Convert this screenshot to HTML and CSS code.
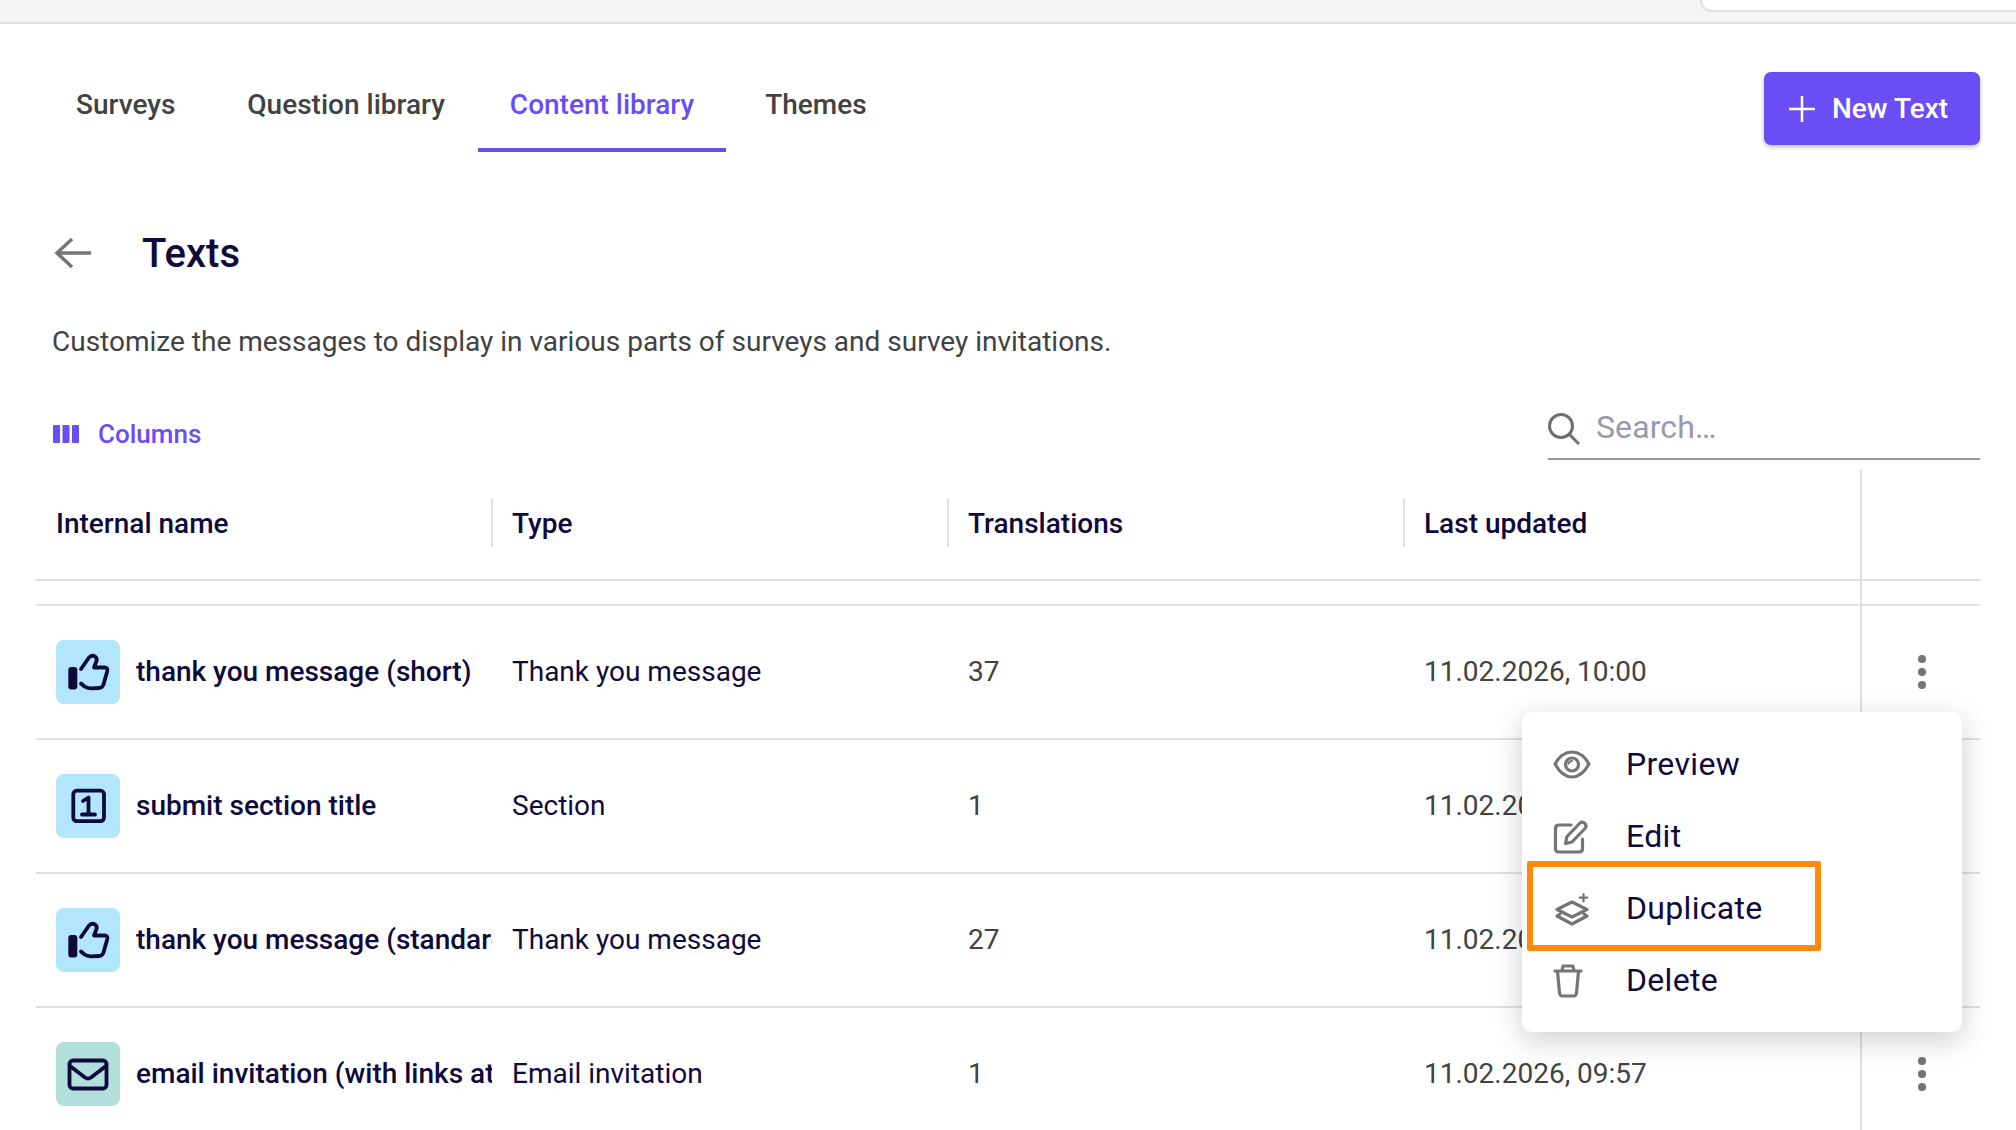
FILE: index.html
```html
<!DOCTYPE html>
<html lang="en">
<head>
    <meta charset="UTF-8">
    <title>Texts</title>
    <link rel="stylesheet" href="styles.css">
</head>
<body>
    <div class="topbar"><div class="topbar-tab"></div></div>

    <div class="nav">
        <div class="tabs">
            <a class="tab">Surveys</a>
            <a class="tab">Question library</a>
            <a class="tab tab-active">Content library</a>
            <a class="tab">Themes</a>
        </div>
        <button class="btn-new">
            <svg class="btn-plus" viewBox="0 0 26 26"><path d="M13 0V26M0 13H26"/></svg>
            New Text
        </button>
    </div>

    <div class="page-head">
        <svg class="back" viewBox="0 0 38 32"><path d="M37 16H3M18 2L3 16L18 30"/></svg>
        <h1>Texts</h1>
    </div>
    <p class="desc">Customize the messages to display in various parts of surveys and survey invitations.</p>

    <div class="toolbar">
        <a class="columns">
            <svg class="columns-icon" viewBox="0 0 26 18"><rect width="7" height="18" rx="1"/><rect x="9.500" width="7" height="18" rx="1"/><rect x="19" width="7" height="18" rx="1"/></svg>
            Columns
        </a>
        <div class="search">
            <svg class="search-icon" viewBox="0 0 32 32"><circle cx="13" cy="13" r="11.5"/><path d="M21.5 21.5L31 31"/></svg>
            <span>Search…</span>
        </div>
    </div>

    <div class="table">
        <div class="row head">
            <div class="cell"><span>Internal name</span></div>
            <div class="cell"><span>Type</span></div>
            <div class="cell"><span>Translations</span></div>
            <div class="cell"><span>Last updated</span></div>
            <div class="cell-action"></div>
        </div>
        <div class="row filter">
            <div class="cell"></div><div class="cell"></div><div class="cell"></div><div class="cell"></div>
            <div class="cell-action"></div>
        </div>

        <div class="row">
            <div class="cell name">
                <div class="type-icon blue">
                    <svg viewBox="0 0 64 64"><use href="#thumb"/></svg>
                </div>
                <span>thank you message (short)</span>
            </div>
            <div class="cell navy">Thank you message</div>
            <div class="cell gray">37</div>
            <div class="cell gray">11.02.2026, 10:00</div>
            <div class="cell-action"><i class="dots"></i></div>
        </div>
        <div class="row">
            <div class="cell name">
                <div class="type-icon blue">
                    <svg viewBox="0 0 64 64">
                        <rect x="17.300" y="16.700" width="30.700" height="30.400" rx="3.500" class="line"/>
                        <path d="M27 27L32.500 23.500V40M26 40.500H39" class="line"/>
                    </svg>
                </div>
                <span>submit section title</span>
            </div>
            <div class="cell navy">Section</div>
            <div class="cell gray">1</div>
            <div class="cell gray">11.02.2026, 09:58</div>
            <div class="cell-action"></div>
        </div>
        <div class="row">
            <div class="cell name">
                <div class="type-icon blue">
                    <svg viewBox="0 0 64 64"><use href="#thumb"/></svg>
                </div>
                <span>thank you message (standard)</span>
            </div>
            <div class="cell navy">Thank you message</div>
            <div class="cell gray">27</div>
            <div class="cell gray">11.02.2026, 09:58</div>
            <div class="cell-action"></div>
        </div>
        <div class="row">
            <div class="cell name">
                <div class="type-icon teal">
                    <svg viewBox="0 0 64 64">
                        <rect x="13.500" y="18.500" width="37" height="28" rx="3.500" class="line"/>
                        <path d="M14 24L29 35.500Q32 37.500 35 35.500L50 24" class="line"/>
                    </svg>
                </div>
                <span>email invitation (with links at the bottom)</span>
            </div>
            <div class="cell navy">Email invitation</div>
            <div class="cell gray">1</div>
            <div class="cell gray">11.02.2026, 09:57</div>
            <div class="cell-action"><i class="dots"></i></div>
        </div>
    </div>

    <!-- row action menu, open on the first row -->
    <div class="menu">
        <div class="menu-item">
            <svg viewBox="0 0 40 40"><path d="M3 20C8 11 14 8 20 8C26 8 32 11 37 20C32 29 26 33 20 33C14 33 8 29 3 20Z"/><circle cx="20" cy="20.5" r="6.5"/><path d="M16.5 19.5Q17.5 17 20 17" class="thin"/></svg>
            Preview
        </div>
        <div class="menu-item">
            <svg viewBox="0 0 40 40"><path d="M19 9H7Q3.500 9 3.500 12.500V32.500Q3.500 36 7 36H27Q30.500 36 30.500 32.500V23"/><path d="M13.500 27.500L15 20.500L28 7Q30.500 5 33 7.500Q35 10 33 12.500L20 26Z"/></svg>
            Edit
        </div>
        <div class="menu-item">
            <svg viewBox="0 0 40 40"><path d="M5 21.500L20 14L35 21.500L20 29Z"/><path d="M8 26L5 28L20 36L35 28L32 26"/><path d="M31.500 6V13.500M27.800 9.700H35.200" class="thin"/></svg>
            Duplicate
        </div>
        <div class="menu-item">
            <svg viewBox="0 0 40 40"><path d="M3 11H29M10 11L11 6H21L22 11M5.500 11L7.500 33Q7.700 36 10.500 36H21.500Q24.300 36 24.500 33L26.500 11"/></svg>
            Delete
        </div>
        <div class="highlight"></div>
    </div>

    <svg class="defs" width="0" height="0">
        <defs>
            <g id="thumb">
                <rect x="12.300" y="27" width="9" height="22.500" rx="3" fill="#0f0a3c"/>
                <path class="line" d="M25 29L33 17.500Q36 14.500 39 16.500Q41.500 18.500 40.500 21L38 27.500H48.500Q52 27.500 51.300 31L47.500 44.500Q46.500 47.500 43.500 48L35 48.300Q31 48.300 28.500 46.500L25 43.500"/>
            </g>
        </defs>
    </svg>
</body>
</html>
```

FILE: styles.css
```css
html, body {
    margin: 0;
    height: 1130px;
    overflow: hidden;
}
body {
    position: relative;
    font-family: Roboto, "Liberation Sans", sans-serif;
    font-size: 28px;
    color: #0f0a3c;
    background: #fff;
}

.topbar {
    height: 22px;
    background: #f4f4f4;
    border-bottom: 2px solid #e0e0e0;
    display: flex;
    justify-content: flex-end;
}
.topbar-tab {
    width: 314px;
    height: 10px;
    background: #fff;
    border-left: 2px solid #e0e0e0;
    border-bottom: 2px solid #e0e0e0;
    border-bottom-left-radius: 12px;
}

.nav {
    display: flex;
    justify-content: space-between;
    align-items: flex-start;
    height: 128px;
    padding: 0 36px 0 44px;
}
.tabs {
    display: flex;
    gap: 8px;
}
.tab {
    height: 124px;
    line-height: 162px;
    padding: 0 32px;
    font-size: 28px;
    font-weight: 500;
    color: #424242;
    border-bottom: 4px solid transparent;
}
.tab-active {
    margin-left: -7px;
    margin-right: -1px;
    color: #6a4df5;
    border-bottom-color: #6a4df5;
}
.btn-new {
    display: flex;
    align-items: center;
    gap: 17px;
    margin-top: 48px;
    width: 216px;
    height: 73px;
    padding: 0 0 0 25px;
    border: 0;
    border-radius: 7px;
    background: #6a4df5;
    color: #fff;
    font: 500 28px Roboto, sans-serif;
    box-shadow: 0 2px 4px rgba(0,0,0,0.25);
}
.btn-plus {
    width: 26px;
    height: 26px;
    fill: none;
    stroke: #fff;
    stroke-width: 2.5;
}

.page-head {
    display: flex;
    align-items: center;
    gap: 50px;
    height: 64px;
    margin-top: 69px;
    padding-left: 54px;
}
.back {
    width: 38px;
    height: 32px;
    fill: none;
    stroke: #757575;
    stroke-width: 3.5;
}
h1 {
    margin: 0;
    font-size: 40px;
    font-weight: 500;
}
.desc {
    margin: 37px 0 0 52px;
    font-size: 28px;
    line-height: 40px;
    color: #424242;
}

.toolbar {
    display: flex;
    justify-content: space-between;
    align-items: flex-end;
    height: 98px;
    padding: 0 36px 0 53px;
}
.columns {
    display: flex;
    align-items: center;
    gap: 19px;
    margin-bottom: 6px;
    line-height: 40px;
    font-size: 26px;
    font-weight: 500;
    color: #6a4df5;
}
.columns-icon {
    width: 26px;
    height: 18px;
    fill: #6a4df5;
}
.search {
    display: flex;
    align-items: center;
    gap: 16px;
    width: 432px;
    height: 58px;
    border-bottom: 2px solid #999;
    font-size: 32px;
    letter-spacing: 0.1px;
    color: #9c97b0;
}
.search span {
    margin-bottom: 5px;
}
.search-icon {
    width: 32px;
    height: 32px;
    fill: none;
    stroke: #6e6e6e;
    stroke-width: 3;
}

.table {
    margin: 10px 36px 0;
}
.row {
    display: grid;
    grid-template-columns: 456px 456px 456px 456px 120px;
    height: 132px;
    border-bottom: 2px solid #e0e0e0;
    align-items: stretch;
}
.row.head {
    height: 109px;
}
.row.filter {
    height: 23px;
}
.cell {
    display: flex;
    align-items: center;
    padding: 0 20px 2px;
    min-width: 0;
    overflow: hidden;
    white-space: nowrap;
}
.head .cell {
    position: relative;
    overflow: visible;
    font-weight: 500;
    padding-bottom: 2px;
}
.head .cell + .cell::before {
    content: "";
    position: absolute;
    left: -1px;
    top: 29px;
    height: 48px;
    border-left: 2px solid #e0e0e0;
}
.cell-action {
    display: flex;
    align-items: center;
    justify-content: center;
    padding-left: 2px;
    border-left: 2px solid #e0e0e0;
}
.name {
    gap: 16px;
    font-weight: 500;
    padding: 0 0 0 20px;
}
.name span {
    overflow: hidden;
    padding-bottom: 2px;
}
.navy {
    color: #0f0a3c;
}
.gray {
    color: #424242;
}
.type-icon {
    flex: none;
    width: 64px;
    height: 64px;
    border-radius: 8px;
}
.type-icon svg {
    display: block;
    width: 64px;
    height: 64px;
}
.blue {
    background: #b3e5fc;
}
.teal {
    background: #b2dfdb;
}
.line {
    fill: none;
    stroke: #0f0a3c;
    stroke-width: 3.800;
    stroke-linejoin: round;
    stroke-linecap: round;
}
.dots {
    width: 7.500px;
    height: 7.500px;
    border-radius: 50%;
    background: #757575;
    box-shadow: 0 -13px 0 #757575, 0 13px 0 #757575;
}

.menu {
    position: absolute;
    left: 1522px;
    top: 712px;
    width: 440px;
    padding: 16px 0;
    background: #fff;
    border-radius: 10px;
    box-shadow: 0 8px 30px rgba(0,0,0,0.2);
}
.menu-item {
    display: flex;
    align-items: center;
    gap: 34px;
    height: 72px;
    padding-left: 30px;
    font-size: 32px;
    letter-spacing: 0.32px;
}
.menu-item svg {
    width: 40px;
    height: 40px;
    margin-top: -1px;
    fill: none;
    stroke: #757575;
    stroke-width: 3.200;
    stroke-linejoin: round;
    stroke-linecap: round;
}
.menu-item svg .thin {
    stroke-width: 2.200;
}
.highlight {
    position: absolute;
    left: 5px;
    top: 149px;
    width: 282px;
    height: 78px;
    border: 6px solid #ff8a0a;
    border-radius: 2px;
}
.defs {
    position: absolute;
}
```
